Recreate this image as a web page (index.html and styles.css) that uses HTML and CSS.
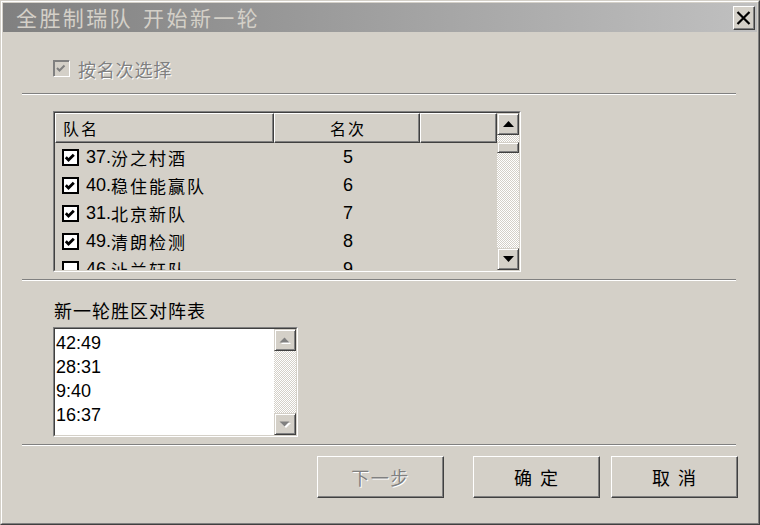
FILE: index.html
```html
<!DOCTYPE html>
<html lang="zh-CN">
<head>
<meta charset="utf-8">
<title>全胜制瑞队 开始新一轮</title>
<link rel="stylesheet" href="styles.css">
</head>
<body>
<div class="window">
  <div class="frame">
    <div class="titlebar">
      <span class="title">全胜制瑞队 开始新一轮</span>
      <div class="close">
        <svg width="15" height="14" viewBox="0 0 15 14"><path d="M1.5 1 L13.5 13 M13.5 1 L1.5 13" stroke="#000" stroke-width="2.2" fill="none"/></svg>
      </div>
    </div>
    <div class="content">
      <div class="opt">
        <span class="cb-disabled">
          <svg width="15" height="15" viewBox="0 0 15 15"><path d="M3 7 L5.5 9.5 L10.5 4.5" stroke="#808080" stroke-width="2" fill="none"/></svg>
        </span>
        <span class="opt-label">按名次选择</span>
      </div>
      <div class="sep"></div>
      <div class="listview sunken">
        <div class="sunken-inner lv-inner">
          <div class="lv-main">
            <div class="lv-header">
              <div class="hcell col-name">队名</div>
              <div class="hcell col-rank">名次</div>
              <div class="hcell col-blank"></div>
            </div>
            <div class="lv-rows">
              <div class="lv-row">
                <div class="col-name cell-name"><span class="cb"><svg width="17" height="17" viewBox="0 0 17 17"><path d="M3.8 8.3 L6.5 11 L11.8 5.7" stroke="#000" stroke-width="2.8" fill="none"/></svg></span><span class="num">37.</span><span class="cn">汾之村酒</span></div>
                <div class="col-rank cell-rank">5</div>
              </div>
              <div class="lv-row">
                <div class="col-name cell-name"><span class="cb"><svg width="17" height="17" viewBox="0 0 17 17"><path d="M3.8 8.3 L6.5 11 L11.8 5.7" stroke="#000" stroke-width="2.8" fill="none"/></svg></span><span class="num">40.</span><span class="cn">稳住能赢队</span></div>
                <div class="col-rank cell-rank">6</div>
              </div>
              <div class="lv-row">
                <div class="col-name cell-name"><span class="cb"><svg width="17" height="17" viewBox="0 0 17 17"><path d="M3.8 8.3 L6.5 11 L11.8 5.7" stroke="#000" stroke-width="2.8" fill="none"/></svg></span><span class="num">31.</span><span class="cn">北京新队</span></div>
                <div class="col-rank cell-rank">7</div>
              </div>
              <div class="lv-row">
                <div class="col-name cell-name"><span class="cb"><svg width="17" height="17" viewBox="0 0 17 17"><path d="M3.8 8.3 L6.5 11 L11.8 5.7" stroke="#000" stroke-width="2.8" fill="none"/></svg></span><span class="num">49.</span><span class="cn">清朗检测</span></div>
                <div class="col-rank cell-rank">8</div>
              </div>
              <div class="lv-row">
                <div class="col-name cell-name"><span class="cb"></span><span class="num">46.</span><span class="cn">沚兰轩队</span></div>
                <div class="col-rank cell-rank">9</div>
              </div>
            </div>
          </div>
          <div class="vscroll">
            <div class="sbtn"><svg width="11" height="6" viewBox="0 0 11 6"><polygon points="5.5,0 11,6 0,6" fill="#000"/></svg></div>
            <div class="track"><div class="thumb"></div></div>
            <div class="sbtn"><svg width="11" height="6" viewBox="0 0 11 6"><polygon points="0,0 11,0 5.5,6" fill="#000"/></svg></div>
          </div>
        </div>
      </div>
      <div class="sep sep2"></div>
      <div class="group-label">新一轮胜区对阵表</div>
      <div class="listbox sunken">
        <div class="sunken-inner lb-inner">
          <div class="lb-items">
            <div class="lb-item">42:49</div>
            <div class="lb-item">28:31</div>
            <div class="lb-item">9:40</div>
            <div class="lb-item">16:37</div>
          </div>
          <div class="vscroll">
            <div class="sbtn"><svg width="12" height="7" viewBox="0 0 12 7"><polygon points="6,1 11,6 1,6" fill="#fff" transform="translate(1,1)"/><polygon points="5.5,0.5 10.5,5.5 0.5,5.5" fill="#808080"/></svg></div>
            <div class="track"></div>
            <div class="sbtn"><svg width="12" height="7" viewBox="0 0 12 7"><polygon points="1,1 11,1 6,6" fill="#fff" transform="translate(1,1)"/><polygon points="0.5,0.5 10.5,0.5 5.5,5.5" fill="#808080"/></svg></div>
          </div>
        </div>
      </div>
      <div class="sep sep3"></div>
      <div class="buttons">
        <div class="btn disabled btn-next">下一步</div>
        <div class="btn btn-ok">确 定</div>
        <div class="btn btn-cancel">取 消</div>
      </div>
    </div>
  </div>
</div>
</body>
</html>
```
FILE: styles.css
```css
* { box-sizing: border-box; margin: 0; padding: 0; }
html, body { width: 760px; height: 525px; overflow: hidden; }
body {
  background: #d4d0c8;
  font-family: "Noto Sans CJK SC", sans-serif;
  color: #000;
}
.window {
  width: 760px;
  height: 525px;
  border: 1px solid;
  border-color: #d4d0c8 #404040 #404040 #d4d0c8;
  background: #d4d0c8;
}
.frame {
  height: 100%;
  border: 1px solid;
  border-color: #fff #808080 #808080 #fff;
  padding: 1px;
  display: flex;
  flex-direction: column;
}
.titlebar {
  flex: none;
  height: 29px;
  display: flex;
  align-items: center;
  padding-left: 13px;
  padding-right: 2px;
  background: linear-gradient(to right, #808080, #c0c0c0);
}
.title {
  flex: 1;
  color: #d4d0c8;
  font-size: 21px;
  letter-spacing: 2.4px;
  word-spacing: 3px;
  line-height: 29px;
  white-space: pre;
}
.close {
  width: 22px;
  height: 24px;
  border: 1px solid;
  border-color: #fff #404040 #404040 #fff;
  box-shadow: inset -1px -1px #808080;
  background: #d4d0c8;
  display: flex;
  align-items: center;
  justify-content: center;
  padding-right: 1px;
  padding-top: 1px;
}
.content {
  flex: 1;
  padding: 0 21px 0 19px;
  display: flex;
  flex-direction: column;
}
.opt {
  margin-top: 28px;
  margin-left: 31px;
  height: 17px;
  display: flex;
  align-items: center;
}
.cb-disabled {
  width: 17px;
  height: 17px;
  border: 1px solid;
  border-color: #808080 #fff #fff #808080;
  box-shadow: inset 1px 1px #808080;
  background: #d4d0c8;
  display: flex;
  align-items: center;
  justify-content: center;
}
.opt-label {
  margin-left: 8px;
  font-size: 18px;
  letter-spacing: 0.8px;
  color: #808080;
  text-shadow: 1px 1px 0 #fff;
  line-height: 20px;
}
.sep {
  height: 2px;
  border-top: 1px solid #808080;
  border-bottom: 1px solid #fff;
  margin-top: 16px;
}
.sep2 { margin-top: 7px; }
.sep3 { margin-top: 7px; }
.sunken {
  border: 1px solid;
  border-color: #808080 #fff #fff #808080;
}
.sunken-inner {
  height: 100%;
  border: 1px solid;
  border-color: #404040 #d4d0c8 #d4d0c8 #404040;
}
.listview {
  margin-top: 16px;
  margin-left: 31px;
  width: 468px;
  height: 161px;
}
.lv-inner {
  display: flex;
  background: #d4d0c8;
}
.lv-main {
  flex: 1;
  display: flex;
  flex-direction: column;
  overflow: hidden;
}
.lv-header {
  flex: none;
  display: flex;
  height: 30px;
}
.hcell {
  height: 30px;
  border: 1px solid;
  border-color: #fff #404040 #404040 #fff;
  box-shadow: inset -1px -1px #808080;
  font-size: 16px;
  letter-spacing: 2px;
  line-height: 27px;
  padding-top: 1px;
}
.col-name { width: 219px; flex: none; }
.col-rank { width: 146px; flex: none; text-align: center; }
.col-blank { flex: 1; }
.hcell.col-name { padding-left: 7px; }
.hcell.col-rank { padding-left: 2px; }
.lv-rows {
  flex: 1;
  overflow: hidden;
}
.lv-row {
  height: 28px;
  display: flex;
  align-items: center;
}
.cell-name {
  display: flex;
  align-items: center;
  padding-left: 7px;
}
.cb {
  width: 17px;
  height: 17px;
  border: 2px solid #000;
  background: #fff;
  flex: none;
  position: relative;
}
.cb svg {
  position: absolute;
  left: -2px;
  top: -2px;
}
.num {
  margin-left: 7px;
  font-family: "Liberation Sans", Arial, sans-serif;
  font-size: 18px;
}
.cn {
  font-size: 17px;
  letter-spacing: 2px;
}
.cell-rank {
  font-family: "Liberation Sans", Arial, sans-serif;
  font-size: 18px;
  padding-left: 2px;
}
.vscroll {
  width: 22px;
  flex: none;
  display: flex;
  flex-direction: column;
}
.sbtn {
  flex: none;
  width: 22px;
  height: 22px;
  border: 1px solid;
  border-color: #d4d0c8 #404040 #404040 #d4d0c8;
  box-shadow: inset 1px 1px #fff, inset -1px -1px #808080;
  background: #d4d0c8;
  display: flex;
  align-items: center;
  justify-content: center;
}
.track {
  flex: 1;
  background: repeating-conic-gradient(#fff 0 25%, #d4d0c8 0 50%) 0 0 / 2px 2px;
}
.thumb {
  margin-top: 7px;
  width: 22px;
  height: 11px;
  border: 1px solid;
  border-color: #d4d0c8 #404040 #404040 #d4d0c8;
  box-shadow: inset 1px 1px #fff, inset -1px -1px #808080;
  background: #d4d0c8;
}
.group-label {
  margin-top: 19px;
  margin-left: 32px;
  font-size: 18px;
  letter-spacing: 1px;
  line-height: 20px;
}
.listbox {
  margin-top: 7px;
  margin-left: 31px;
  width: 245px;
  height: 110px;
}
.lb-inner {
  display: flex;
  background: #fff;
}
.lb-items {
  flex: 1;
  padding-left: 1px;
  padding-top: 2px;
  overflow: hidden;
}
.lb-item {
  font-family: "Liberation Sans", Arial, sans-serif;
  font-size: 18px;
  line-height: 24px;
}
.buttons {
  margin-top: 10px;
  margin-right: -2px;
  display: flex;
  justify-content: flex-end;
}
.btn {
  width: 127px;
  height: 42px;
  border: 1px solid;
  border-color: #fff #404040 #404040 #fff;
  box-shadow: inset -1px -1px #808080;
  background: #d4d0c8;
  display: flex;
  align-items: center;
  justify-content: center;
  font-size: 18px;
  letter-spacing: 1px;
  word-spacing: 2px;
  white-space: pre;
}
.btn.disabled {
  color: #808080;
  text-shadow: 1px 1px 0 #fff;
  letter-spacing: 1.5px;
}
.btn-ok { margin-left: 29px; }
.btn-cancel { margin-left: 11px; }
```
